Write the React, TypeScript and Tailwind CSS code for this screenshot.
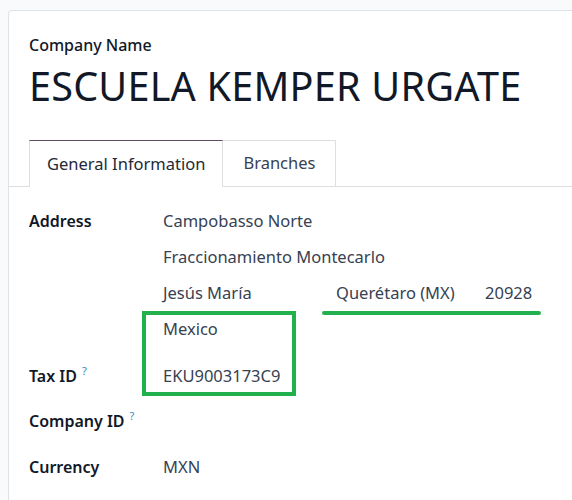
import { ReactNode } from "react";

// Ficha de compañía con pestañas y campos de dirección

const FONT = "font-['Noto_Sans','Open_Sans',sans-serif]";

function Help() {
  return (
    <sup className="ml-[5px] text-[11px] font-normal text-[#3a8bb8] relative top-[-5px]">
      ?
    </sup>
  );
}

function Field({
  label,
  children,
  className = "",
}: {
  label: ReactNode;
  children?: ReactNode;
  className?: string;
}) {
  return (
    <div className={`flex ${className}`}>
      <div className="w-[134px] shrink-0 h-[36px] flex items-center text-[16px] font-semibold text-[#111827]">
        {label}
      </div>
      <div className="flex-1 text-[16.5px] text-[#374151]">{children}</div>
    </div>
  );
}

function Line({ children }: { children?: ReactNode }) {
  return <div className="h-[36px] flex items-center">{children}</div>;
}

export default function App() {
  return (
    <div
      className={`relative h-[500px] overflow-hidden bg-[#f9fafb] pt-[10px] pl-[8px] ${FONT}`}
    >
      <div className="h-full bg-white border border-r-0 border-b-0 border-[#dee2e6] rounded-tl-[4px]">
        {/* Cabecera */}
        <div className="px-[20px] pt-[24px]">
          <div className="text-[16px] font-medium text-[#111827] leading-[20px]">
            Company Name
          </div>
          <h1 className="text-[39.6px] leading-[54px] mt-[4px] text-[#111827] tracking-[0.2px]">
            ESCUELA KEMPER URGATE
          </h1>
        </div>

        {/* Pestañas */}
        <div className="mt-[27px] flex pl-[20px] border-b border-[#dcdee1]">
          <div className="h-[47px] px-[17px] flex items-center border-t border-t-[#5e4b5b] border-x border-x-[#dcdee1] bg-white mb-[-1px] text-[16.5px] text-[#1f2937]">
            General Information
          </div>
          <div className="h-[46px] px-[20px] flex items-center border-t border-r border-[#dcdee1] text-[16.5px] text-[#374151]">
            Branches
          </div>
        </div>

        {/* Campos */}
        <div className="px-[20px] pt-[16px]">
          <Field label="Address">
            <Line>Campobasso Norte</Line>
            <Line>Fraccionamiento Montecarlo</Line>
            <Line>
              <span className="w-[173px]">Jesús María</span>
              <span className="w-[149px]">Querétaro (MX)</span>
              <span>20928</span>
            </Line>
            <Line>Mexico</Line>
          </Field>
          <Field
            className="mt-[11px]"
            label={
              <>
                Tax ID
                <Help />
              </>
            }
          >
            <Line>EKU9003173C9</Line>
          </Field>
          <Field
            className="mt-[9px]"
            label={
              <>
                Company ID
                <Help />
              </>
            }
          >
            <Line />
          </Field>
          <Field className="mt-[10px]" label="Currency">
            <Line>MXN</Line>
          </Field>
        </div>
      </div>

      {/* Marcas verdes sobre la captura */}
      <div className="absolute left-[142px] top-[311px] w-[154px] h-[85px] border-[4px] border-[#22b14c]" />
      <div className="absolute left-[322px] top-[311px] w-[219px] h-[4px] rounded-full bg-[#22b14c]" />
    </div>
  );
}
